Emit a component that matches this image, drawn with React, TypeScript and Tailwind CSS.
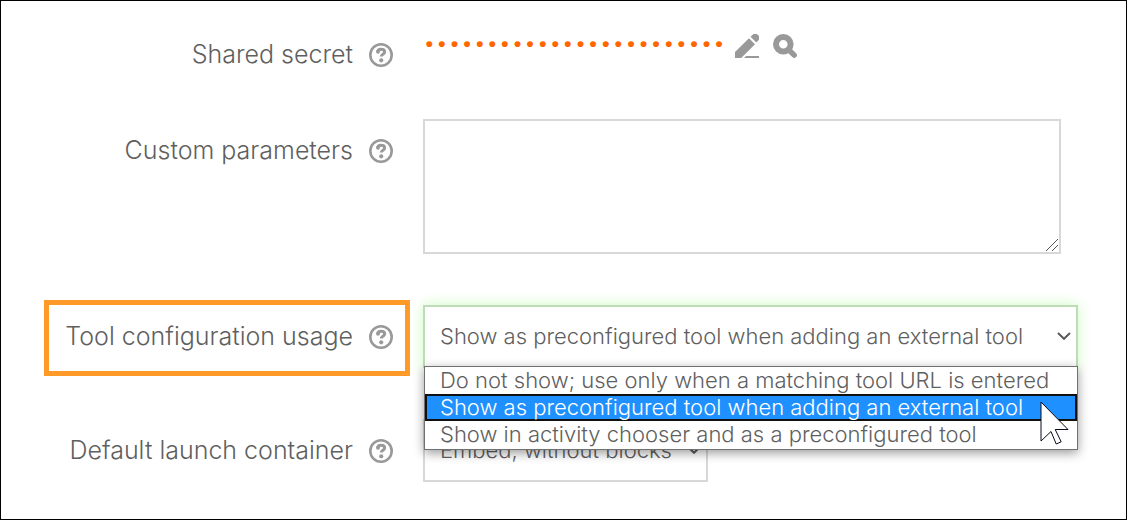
import type { ReactNode } from "react";

function HelpIcon() {
  return (
    <svg viewBox="0 0 24 24" className="size-6" aria-hidden="true">
      <circle cx="12" cy="12" r="10.7" fill="none" stroke="currentColor" strokeWidth="2.6" />
      <path
        d="M8.600 9.200c.1-2.100 1.600-3 3.500-3 2.100 0 3.500 1 3.500 2.700 0 2.400-3.300 2.300-3.300 4.600"
        fill="none"
        stroke="currentColor"
        strokeWidth="3"
      />
      <circle cx="9" cy="8.800" r="1.900" fill="currentColor" />
      <circle cx="12.200" cy="17.300" r="2.100" fill="currentColor" />
    </svg>
  );
}

function EditIcon() {
  return (
    <svg viewBox="0 0 24 24" className="size-6" fill="currentColor" aria-hidden="true">
      <path d="M0 24v-6L14 4.300l6 5.900L6.200 24z" />
      <path d="M15.500 2.800 17.300 1A4 4 0 0 1 23 6.800l-1.700 1.800z" />
      <path d="M9 24l2-2h13v2z" />
    </svg>
  );
}

function SearchIcon() {
  return (
    <svg viewBox="0 0 24 24" className="size-6" fill="none" stroke="currentColor" aria-hidden="true">
      <circle cx="10.300" cy="10.300" r="7.300" strokeWidth="6" />
      <path d="M16.500 16.500l4.700 4.700" strokeWidth="5.400" strokeLinecap="round" />
    </svg>
  );
}

function Chevron() {
  return (
    <svg
      viewBox="0 0 14 8"
      className="pointer-events-none absolute top-[27px] right-[7px] h-2 w-[14px] text-[#5a5a5a]"
      aria-hidden="true"
    >
      <path d="M1 1l6 5.800L13 1" fill="none" stroke="currentColor" strokeWidth="2" />
    </svg>
  );
}

function ResizeGrip() {
  return (
    <svg
      viewBox="0 0 14 14"
      className="pointer-events-none absolute right-[2px] bottom-[2px] size-[14px] bg-white"
      aria-hidden="true"
    >
      <path d="M1 13L13 1M7 13l6-6" fill="none" stroke="#555" strokeWidth="1" />
    </svg>
  );
}

function Pointer() {
  return (
    <svg
      viewBox="0 0 30 46"
      className="pointer-events-none absolute top-[35px] right-[8px] h-[46px] w-[30px]"
      aria-hidden="true"
    >
      <path
        d="M1 1v39l10-9.500 5.200 12.500 5-2.200-6-12.300H28z"
        fill="#fff"
        stroke="#0a0a1a"
        strokeWidth="1"
      />
    </svg>
  );
}

function Field({
  id,
  label,
  highlighted = false,
  children,
}: {
  id: string;
  label: string;
  highlighted?: boolean;
  children: ReactNode;
}) {
  return (
    <div className="grid grid-cols-[366px_minmax(0,1fr)] items-start gap-x-[13px]">
      <div
        className={`flex h-[76px] items-center justify-end gap-4 border-5 pr-3 pb-[2px] ${
          highlighted ? "border-[#ff9a28]" : "border-transparent"
        }`}
      >
        <label htmlFor={id} className="pb-[2px] text-[25px] leading-8 font-light whitespace-nowrap">
          {label}
        </label>
        <button type="button" aria-label={`Help with ${label}`} className="text-[#999]">
          <HelpIcon />
        </button>
      </div>
      {children}
    </div>
  );
}

const usageOptions = [
  "Do not show; use only when a matching tool URL is entered",
  "Show as preconfigured tool when adding an external tool",
  "Show in activity chooser and as a preconfigured tool",
];

const selectClass =
  "block h-[63px] w-full appearance-none border-2 bg-white pr-8 pl-[15px] text-[22px] font-light outline-none";

export default function App() {
  return (
    <main className="min-h-screen border border-black bg-white font-['Inter',sans-serif] text-[#5f5f5f]">
      <form className="flex flex-col pt-[17px] pr-12 pb-7 pl-[43px]">
        <div className="mb-5">
          <Field id="secret" label="Shared secret">
            <div className="flex items-center gap-[10px] pt-4 text-[#999]">
              <output
                id="secret"
                className="font-['Liberation_Mono',monospace] text-[21px] leading-6 font-bold text-[#ff6600]"
              >
                ••••••••••••••••••••••••
              </output>
              <div className="flex gap-[14px]">
                <button type="button" aria-label="Edit secret">
                  <EditIcon />
                </button>
                <button type="button" aria-label="Reveal secret">
                  <SearchIcon />
                </button>
              </div>
            </div>
          </Field>
        </div>

        <div className="mb-[46px]">
          <Field id="parameters" label="Custom parameters">
            <div className="pt-[5px] pr-[17px]">
              <div className="relative">
                <textarea
                  id="parameters"
                  className="block h-[135px] w-full border-2 border-[#d8d8d8] bg-white p-3 text-[22px] font-light outline-none"
                />
                <ResizeGrip />
              </div>
            </div>
          </Field>
        </div>

        <div className="relative z-10 mb-[38px]">
          <Field id="usage" label="Tool configuration usage" highlighted>
            <div className="relative mt-[5px]">
              <select
                id="usage"
                defaultValue={usageOptions[1]}
                className={`${selectClass} border-[#bfdcb9] shadow-[0_0_14px_#cdfac0]`}
              >
                {usageOptions.map((option) => (
                  <option key={option}>{option}</option>
                ))}
              </select>
              <Chevron />
              <div className="absolute top-[61px] right-0 left-px">
                <ul
                  role="listbox"
                  aria-label="Tool configuration usage"
                  className="border border-[#707070] bg-white pb-px text-[22px] leading-[26px] font-light shadow-[0_3px_10px_rgba(0,0,0,0.4)]"
                >
                  {usageOptions.map((option, index) => (
                    <li
                      key={option}
                      role="option"
                      aria-selected={index === 1}
                      className={
                        index === 1
                          ? "h-[27px] border-2 border-[#101010] bg-[#1e90ff] pl-[13px] leading-[22px] whitespace-nowrap text-white"
                          : "h-[27px] pl-[15px] whitespace-nowrap"
                      }
                    >
                      {option}
                    </li>
                  ))}
                </ul>
                <Pointer />
              </div>
            </div>
          </Field>
        </div>

        <Field id="container" label="Default launch container">
          <div className="relative mt-[5px] w-[285px]">
            <select id="container" className={`${selectClass} border-[#d8d8d8]`}>
              <option>Embed, without blocks</option>
            </select>
            <Chevron />
          </div>
        </Field>
      </form>
    </main>
  );
}
